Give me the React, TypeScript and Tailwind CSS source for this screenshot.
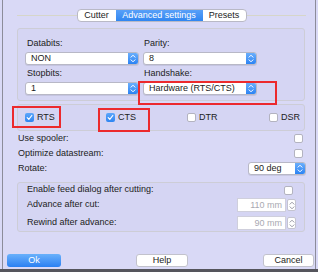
import React from "react";

// Small up/down stepper glyph used in popup buttons
function Chevrons({ color = "#ffffff" }: { color?: string }) {
  return (
    <svg width="6" height="9" viewBox="0 0 6 9" fill="none">
      <path d="M1 3.2 L3 1.2 L5 3.2" stroke={color} strokeWidth="1" strokeLinecap="round" strokeLinejoin="round" />
      <path d="M1 5.8 L3 7.8 L5 5.8" stroke={color} strokeWidth="1" strokeLinecap="round" strokeLinejoin="round" />
    </svg>
  );
}

function Select({ value, w }: { value: string; w: string }) {
  return (
    <div className={`${w} h-[13px] flex bg-white rounded-[3px] border border-[#b8b8c6] shadow-[0_1px_0_rgba(0,0,0,0.08)] overflow-hidden`}>
      <span className="flex-1 pl-[5px] leading-[11px] truncate">{value}</span>
      <span className="w-[10px] flex items-center justify-center bg-gradient-to-b from-[#6aaefb] to-[#2a83f4]">
        <Chevrons />
      </span>
    </div>
  );
}

function Checkbox({ checked = false }: { checked?: boolean }) {
  if (checked) {
    return (
      <span className="w-[9px] h-[9px] rounded-[2px] bg-gradient-to-b from-[#5ca6fa] to-[#2d85f2] flex items-center justify-center shrink-0">
        <svg width="7" height="7" viewBox="0 0 7 7" fill="none">
          <path d="M1.2 3.7 L2.8 5.3 L5.8 1.5" stroke="#fff" strokeWidth="1.2" strokeLinecap="round" strokeLinejoin="round" />
        </svg>
      </span>
    );
  }
  return <span className="w-[9px] h-[9px] rounded-[2px] bg-white border border-[#b3b3c0] shrink-0" />;
}

function NumField({ value }: { value: string }) {
  return (
    <div className="flex items-center gap-[1px]">
      <div className="w-[49px] h-[14px] bg-white border border-[#cfcfdc] text-right pr-[3px] leading-[12px] text-[#a9a9b2]">
        {value}
      </div>
      <div className="w-[9px] h-[12px] bg-white rounded-[2px] border border-[#c4c4d0] flex items-center justify-center">
        <Chevrons color="#9a9aa6" />
      </div>
    </div>
  );
}

export default function App() {
  return (
    <div className="w-[318px] h-[272px] bg-[#d9d9f6] relative overflow-hidden flex flex-col font-['Liberation_Sans',Arial,sans-serif] text-[9px] text-[#1c1c22]">
      <div className="ml-[2px] w-[314px] flex-1 border-x border-[#8c8c9a] flex flex-col">
        {/* Tabs */}
        <div className="pt-[9px] flex items-center">
          <div className="ml-[14px] flex-1 h-px bg-[#d6d6c9]" />
          <div className="flex h-[13px] rounded-[4px] border border-[#b9b9c6] bg-white overflow-hidden leading-[11px]">
            <span className="w-[38px] text-center">Cutter</span>
            <span className="w-[87px] text-center bg-gradient-to-b from-[#58a0f8] to-[#2f86f1] text-white">Advanced settings</span>
            <span className="w-[43px] text-center">Presets</span>
          </div>
          <div className="mr-[9px] flex-1 h-px bg-[#d6d6c9]" />
        </div>

        {/* Port settings */}
        <div className="mt-[6px] ml-[14px] w-[288px] h-[73px] rounded-[3px] border border-[#cdcdd6] bg-[#d5d5f3] pt-[7px] pl-[7px]">
          <div className="grid grid-cols-[114px_114px] gap-x-[4px]">
            <span className="pl-[2px] h-[14px] leading-[14px]">Databits:</span>
            <span className="pl-[1px] h-[14px] leading-[14px]">Parity:</span>
            <div className="mt-[2px]"><Select value="NON" w="w-[114px]" /></div>
            <div className="mt-[2px]"><Select value="8" w="w-[114px]" /></div>
            <span className="pl-[2px] mt-[1px] h-[14px] leading-[14px]">Stopbits:</span>
            <span className="pl-[1px] mt-[1px] h-[14px] leading-[14px]">Handshake:</span>
            <div className="mt-[2px]"><Select value="1" w="w-[114px]" /></div>
            <div className="mt-[2px]"><Select value="Hardware (RTS/CTS)" w="w-[114px]" /></div>
          </div>
        </div>

        {/* Line signals */}
        <div className="mt-[3px] ml-[14px] w-[288px] h-[27px] rounded-[3px] border border-[#cdcdd6] bg-[#d5d5f3] flex items-center pl-[7px]">
          <label className="w-[81px] flex items-center gap-[3px]"><Checkbox checked />RTS</label>
          <label className="w-[81px] flex items-center gap-[3px]"><Checkbox checked />CTS</label>
          <label className="w-[82px] flex items-center gap-[3px]"><Checkbox />DTR</label>
          <label className="flex items-center gap-[3px]"><Checkbox />DSR</label>
        </div>

        <div className="ml-[15px] mr-[12px] h-[15px] flex items-center justify-between">
          <span>Use spooler:</span>
          <Checkbox />
        </div>
        <div className="ml-[15px] mr-[12px] h-[15px] flex items-center justify-between">
          <span>Optimize datastream:</span>
          <Checkbox />
        </div>
        <div className="ml-[15px] mr-[9px] h-[15px] flex items-center justify-between">
          <span>Rotate:</span>
          <Select value="90 deg" w="w-[58px]" />
        </div>

        {/* Feed */}
        <div className="mt-[6px] ml-[14px] w-[288px] h-[50px] rounded-[3px] border border-[#cdcdd6] bg-[#d5d5f3] pl-[9px] pr-[8px]">
          <div className="h-[14px] flex items-center justify-between pr-[3px]">
            <span>Enable feed dialog after cutting:</span>
            <Checkbox />
          </div>
          <div className="mt-[1px] h-[14px] flex items-center justify-between">
            <span>Advance after cut:</span>
            <NumField value="110 mm" />
          </div>
          <div className="mt-[4px] h-[14px] flex items-center justify-between">
            <span>Rewind after advance:</span>
            <NumField value="90 mm" />
          </div>
        </div>

        {/* Buttons */}
        <div className="mt-[22px] ml-[4px] mr-[1px] flex justify-between leading-[11px]">
          <button className="w-[54px] h-[13px] rounded-[3px] bg-gradient-to-b from-[#69b0fb] to-[#2a80f2] text-white text-[9px]">Ok</button>
          <button className="w-[52px] h-[13px] rounded-[3px] bg-white border border-[#c2c2cc] text-[9px]">Help</button>
          <button className="w-[51px] h-[13px] rounded-[3px] bg-white border border-[#c2c2cc] text-[9px]">Cancel</button>
        </div>
      </div>
      <div className="h-[3px] bg-[#55555c]" />

      {/* Red annotation frames */}
      <div className="absolute left-[138px] top-[81px] w-[139px] h-[24px] border-2 border-[#ec2a2d]" />
      <div className="absolute left-[12px] top-[106px] w-[49px] h-[22px] border-2 border-[#ec2a2d]" />
      <div className="absolute left-[98px] top-[108px] w-[52px] h-[24px] border-2 border-[#ec2a2d]" />
    </div>
  );
}
